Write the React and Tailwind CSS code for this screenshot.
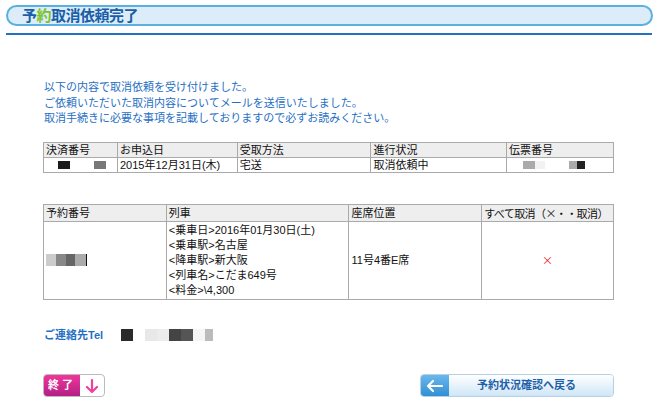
export default function App() {
  const jp = { fontFamily: '"Liberation Sans", "Noto Sans CJK JP", "Noto Sans", sans-serif' };
  const cjk = { fontFamily: '"Noto Sans CJK JP", sans-serif' };
  const th = "border border-[#aaa] bg-[#eee] px-[2px] text-left font-normal align-middle h-[14px] leading-[14px]";
  const td = "border border-[#aaa] px-[2px] align-middle";

  return (
    <div className="w-[660px] h-[400px] bg-white text-[11px] text-[#111] overflow-hidden" style={jp}>
      {/* title bar */}
      <div className="pt-[5px] px-[6px]">
        <div className="h-[21px] w-[647px] rounded-full border-2 border-[#5ab0e0] bg-[#dcedf9] flex items-center pl-[14px]">
          <span className="text-[15px] font-bold text-[#1a5ea8] leading-none tracking-[-0.5px]">
            予<span className="text-[#7cc22c]">約</span>取消依頼完了
          </span>
        </div>
        <div className="mt-[7px] h-[2px] w-[646px] bg-[#2271c4]" />
      </div>

      {/* message */}
      <div className="mt-[45px] pl-[44px] text-[#1f6fc4] text-[11px] leading-[15.5px]">
        <p>以下の内容で取消依頼を受け付けました。</p>
        <p>ご依頼いただいた取消内容についてメールを送信いたしました。</p>
        <p>取消手続きに必要な事項を記載しておりますので必ずお読みください。</p>
      </div>

      {/* table 1 */}
      <table className="ml-[43px] mt-[15px] w-[571px] border-collapse text-[11px]">
        <colgroup>
          <col className="w-[74px]" />
          <col className="w-[120px]" />
          <col className="w-[134px]" />
          <col className="w-[136px]" />
          <col className="w-[107px]" />
        </colgroup>
        <thead>
          <tr>
            <th className={th}>決済番号</th>
            <th className={th}>お申込日</th>
            <th className={th}>受取方法</th>
            <th className={th}>進行状況</th>
            <th className={th}>伝票番号</th>
          </tr>
        </thead>
        <tbody>
          <tr className="h-[14px] leading-[14px]">
            <td className={td}>
              <div className="flex items-center pl-[12px] gap-[24px]">
                <span className="w-[12px] h-[8px] bg-[#1a1a1a]" />
                <span className="w-[12px] h-[8px] bg-[#777]" />
              </div>
            </td>
            <td className={td}>2015年12月31日(木)</td>
            <td className={td}>宅送</td>
            <td className={td}>取消依頼中</td>
            <td className={td}>
              <div className="flex items-center pl-[14px]">
                <span className="w-[12px] h-[8px] bg-[#aaa]" />
                <span className="w-[10px] h-[8px] bg-[#f2f2f2]" />
                <span className="ml-[24px] w-[8px] h-[8px] bg-[#aaa]" />
                <span className="w-[8px] h-[8px] bg-[#222]" />
              </div>
            </td>
          </tr>
        </tbody>
      </table>

      {/* table 2 */}
      <table className="ml-[43px] mt-[31px] w-[571px] border-collapse text-[11px]">
        <colgroup>
          <col className="w-[123px]" />
          <col className="w-[183px]" />
          <col className="w-[133px]" />
          <col className="w-[132px]" />
        </colgroup>
        <thead>
          <tr>
            <th className={`${th} h-[17px]`}>予約番号</th>
            <th className={`${th} h-[17px]`}>列車</th>
            <th className={`${th} h-[17px]`}>座席位置</th>
            <th className={`${th} h-[17px] tracking-[-0.6px]`} style={cjk}>すべて取消（×・・取消）</th>
          </tr>
        </thead>
        <tbody>
          <tr className="h-[76px]">
            <td className={td}>
              <div className="flex items-center">
                <span className="w-[10px] h-[12px] bg-[#ccc]" />
                <span className="w-[10px] h-[12px] bg-[#888]" />
                <span className="w-[9px] h-[12px] bg-[#666]" />
                <span className="w-[11px] h-[12px] bg-[#aaa]" />
                <span className="w-[1px] h-[12px] bg-[#111]" />
              </div>
            </td>
            <td className={`${td} leading-[15px] py-[1px]`}>
              <p>&lt;乗車日&gt;2016年01月30日(土)</p>
              <p>&lt;乗車駅&gt;名古屋</p>
              <p>&lt;降車駅&gt;新大阪</p>
              <p>&lt;列車名&gt;こだま649号</p>
              <p>&lt;料金&gt;\4,300</p>
            </td>
            <td className={td}>11号4番E席</td>
            <td className={`${td} text-center text-[#e62020]`} style={cjk}>×</td>
          </tr>
        </tbody>
      </table>

      {/* contact */}
      <div className="mt-[27px] ml-[44px] flex items-center">
        <span className="text-[#1f6fc4] text-[11px] font-bold w-[77px]">ご連絡先Tel</span>
        <div className="flex items-center">
          <span className="w-[12px] h-[12px] bg-[#2a2a2a]" />
          <span className="ml-[12px] w-[12px] h-[12px] bg-[#e8e8e8]" />
          <span className="w-[12px] h-[12px] bg-[#ececec]" />
          <span className="w-[12px] h-[12px] bg-[#444]" />
          <span className="w-[12px] h-[12px] bg-[#555]" />
          <span className="w-[12px] h-[12px] bg-[#f5f5f5]" />
          <span className="w-[8px] h-[12px] bg-[#bbb]" />
        </div>
      </div>

      {/* buttons */}
      <div className="mt-[31px] ml-[43px] flex items-center justify-between w-[571px]">
        <div className="flex h-[23px] w-[62px] rounded-[4px] border border-[#bbb] overflow-hidden bg-white">
          <div className="w-[36px] bg-gradient-to-b from-[#f0369a] to-[#b41f86] text-white text-[11px] font-bold flex items-center justify-center tracking-[3px]">
            終了
          </div>
          <div className="flex-1 flex items-center justify-center">
            <svg width="16" height="16" viewBox="0 0 16 16" fill="none" stroke="#f0409a" strokeWidth="2.2" strokeLinecap="round" strokeLinejoin="round">
              <path d="M8 2v12M3 9l5 5 5-5" />
            </svg>
          </div>
        </div>
        <div className="flex h-[23px] w-[194px] rounded-[4px] border border-[#b6d0e6] overflow-hidden">
          <div className="w-[28px] bg-gradient-to-b from-[#6ab7ec] to-[#2f8fd4] flex items-center justify-center">
            <svg width="18" height="14" viewBox="0 0 18 14" fill="none" stroke="white" strokeWidth="2.2" strokeLinecap="round" strokeLinejoin="round">
              <path d="M16 7H2M7 2L2 7l5 5" />
            </svg>
          </div>
          <div className="flex-1 bg-gradient-to-b from-[#ffffff] to-[#cfe6f7] flex items-center pl-[28px] text-[#1e5fa8] font-bold text-[11px]">
            予約状況確認へ戻る
          </div>
        </div>
      </div>
    </div>
  );
}
